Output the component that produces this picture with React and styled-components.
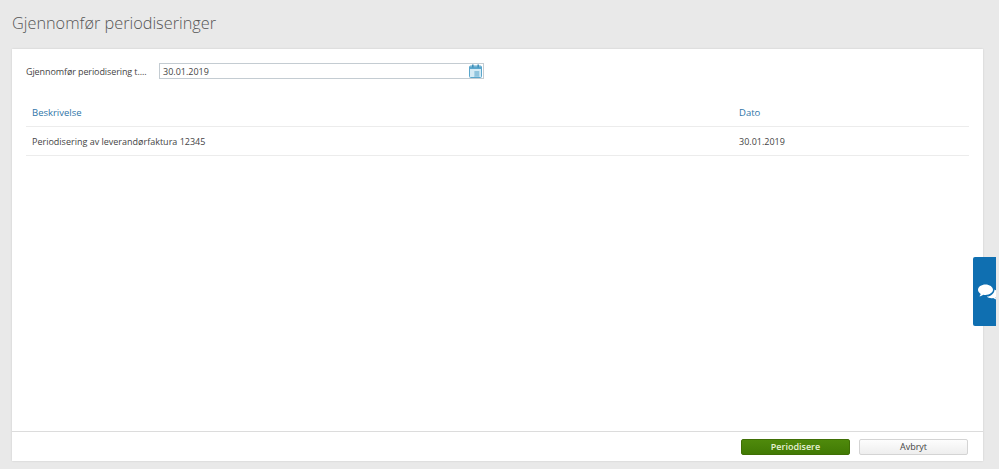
import React from "react";
import styled, { createGlobalStyle } from "styled-components";

const GlobalStyle = createGlobalStyle`
  html, body {
    margin: 0;
    height: 100%;
    background: #e9e9e9;
    font-family: "Open Sans", "Liberation Sans", sans-serif;
    overflow: hidden;
  }
`;

const Page = styled.div`
  position: relative;
  box-sizing: border-box;
  width: 999px;
  height: 469px;
  padding: 0 16px 8px 12px;
  display: flex;
  flex-direction: column;
`;

const Title = styled.h1`
  margin: 0;
  height: 49px;
  line-height: 46px;
  font-size: 16.3px;
  font-weight: 300;
  color: #555;
`;

const Panel = styled.div`
  flex: 1;
  display: flex;
  flex-direction: column;
  background: #fff;
  min-height: 0;
  box-shadow: 0 0 2px rgba(0, 0, 0, 0.12);
`;

const Content = styled.div`
  flex: 1;
  padding: 14px 14px 0 14px;
`;

const FieldRow = styled.div`
  display: flex;
  align-items: center;
  height: 16px;
`;

const FieldLabel = styled.label`
  width: 133px;
  font-size: 9px;
  letter-spacing: -0.1px;
  color: #444;
  white-space: nowrap;
`;

const DateInput = styled.div`
  box-sizing: border-box;
  width: 325px;
  height: 16px;
  padding: 0 1px 0 3px;
  display: flex;
  align-items: center;
  justify-content: space-between;
  border: 1px solid #c4ccd2;
  font-size: 9px;
  color: #444;
`;

const Table = styled.div`
  margin-top: 19px;
`;

const Row = styled.div`
  box-sizing: border-box;
  display: grid;
  grid-template-columns: 707px 1fr;
  align-items: center;
  height: 29px;
  padding: 1px 0 0 6px;
  border-bottom: 1px solid #ececec;
  font-size: ${(p) => (p.$head ? "9.5px" : "9px")};
  color: ${(p) => (p.$head ? "#2f75a8" : "#444")};
`;

const Footer = styled.div`
  height: 29px;
  padding-right: 15px;
  display: flex;
  align-items: center;
  justify-content: flex-end;
  gap: 9px;
  border-top: 1px solid #dcdcdc;
`;

const Button = styled.button`
  box-sizing: border-box;
  width: 109px;
  height: 16px;
  padding: 0;
  border-radius: 2px;
  font-family: inherit;
  font-size: 9px;
  font-weight: ${(p) => (p.$primary ? 600 : 400)};
  border: 1px solid ${(p) => (p.$primary ? "#3f6f05" : "#d4d4d4")};
  color: ${(p) => (p.$primary ? "#e6f2d5" : "#444")};
  background: ${(p) =>
    p.$primary
      ? "linear-gradient(#4f8a0c, #417a04)"
      : "linear-gradient(#fdfdfd, #eeeeee)"};
`;

const ChatTab = styled.div`
  position: absolute;
  left: 973px;
  top: 257px;
  width: 23px;
  height: 69px;
  overflow: hidden;
  border-radius: 2px 0 0 2px;
  background: #0f6fb1;
`;

const ChatIcon = styled.svg`
  position: absolute;
  left: 5px;
  top: 27px;
  width: 22px;
  height: 17px;
  fill: #fff;
`;

const CalendarIcon = () => (
  <svg width="13" height="14" viewBox="0 0 13 14">
    <rect x="0.5" y="2" width="12" height="11.5" rx="1" fill="#d6ebf5" stroke="#5aa6cc" />
    <rect x="1" y="2.5" width="11" height="2.5" fill="#5aa6cc" />
    <rect x="3" y="0.5" width="1.6" height="3" fill="#3f8fb8" />
    <rect x="8.4" y="0.5" width="1.6" height="3" fill="#3f8fb8" />
    <path d="M5 8h5.500M5 10h5.500M5 12h5.500M7 7v5.500M9 7v5.500" stroke="#6aaed0" strokeWidth="0.8" fill="none" />
  </svg>
);

const App = () => (
  <Page>
    <GlobalStyle />
    <Title>Gjennomfør periodiseringer</Title>
    <Panel>
      <Content>
        <FieldRow>
          <FieldLabel>Gjennomfør periodisering t....</FieldLabel>
          <DateInput>
            30.01.2019
            <CalendarIcon />
          </DateInput>
        </FieldRow>
        <Table>
          <Row $head>
            <span>Beskrivelse</span>
            <span>Dato</span>
          </Row>
          <Row>
            <span>Periodisering av leverandørfaktura 12345</span>
            <span>30.01.2019</span>
          </Row>
        </Table>
      </Content>
      <Footer>
        <Button $primary>Periodisere</Button>
        <Button>Avbryt</Button>
      </Footer>
    </Panel>
    <ChatTab>
      <ChatIcon viewBox="0 0 22 17">
        <path d="M7.500 0.500C3.400 0.500 0 2.900 0 5.800c0 1.700 1.100 3.100 2.700 4.100-.2.900-.7 1.700-1.400 2.400 1.600-.1 3-.7 4-1.600.7.100 1.400.200 2.200.200 4.100 0 7.500-2.300 7.500-5.100S11.600 0.500 7.500 0.500z" />
        <path d="M16.500 5.500c.1 3.600-3.200 6.600-7.800 7.100 1.200 1 2.800 1.600 4.700 1.600.6 0 1.200 0 1.800-.2.900.8 2.100 1.400 3.500 1.500-.6-.6-1-1.300-1.200-2 1.600-.9 2.500-2.200 2.500-3.700 0-1.700-1.100-3.200-3.500-4.300z" />
      </ChatIcon>
    </ChatTab>
  </Page>
);

export default App;
